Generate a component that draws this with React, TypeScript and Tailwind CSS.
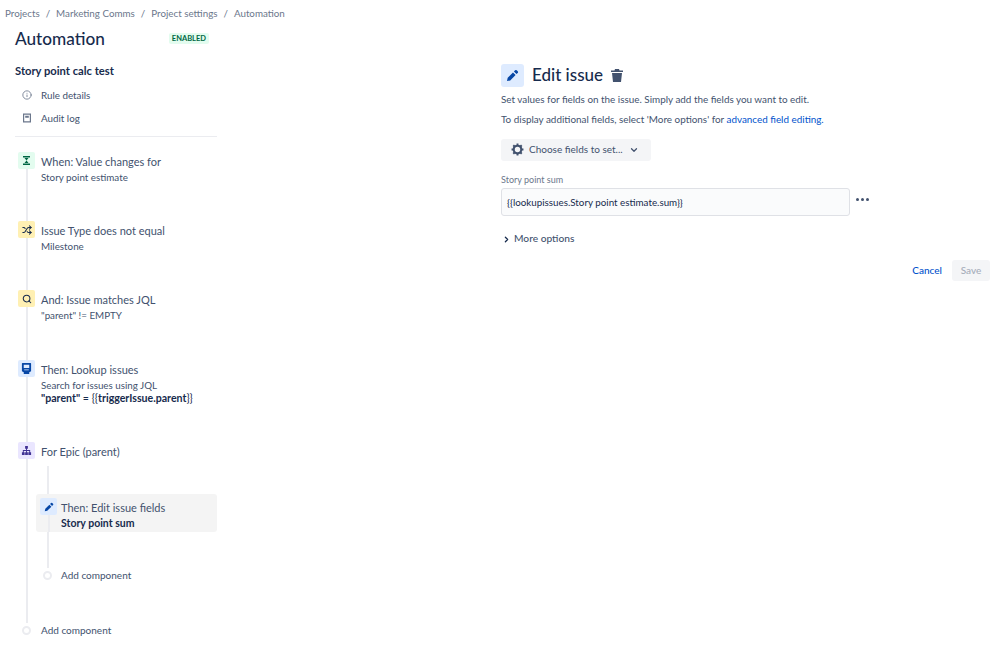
import { ChevronDown, ChevronRight, Info, Search, Shuffle } from "lucide-react";

const font = { fontFamily: 'Lato, "Noto Sans", sans-serif' };

function Pencil({ size = 12, color = "#0747a6" }: { size?: number; color?: string }) {
  return (
    <svg width={size} height={size} viewBox="0 0 16 16" fill={color}>
      <path d="M11.2 1.6a1.4 1.4 0 0 1 2 0l1.2 1.2a1.4 1.4 0 0 1 0 2l-1.5 1.5-3.2-3.2zM8.6 4.2l3.2 3.2-6.6 6.6-4 .9.9-4z" />
    </svg>
  );
}

function StepIcon({ bg, children }: { bg: string; children: React.ReactNode }) {
  return (
    <div className={`flex h-[17px] w-[17px] shrink-0 items-center justify-center rounded-[2px] ${bg}`}>{children}</div>
  );
}

function Rail({ icon }: { icon: React.ReactNode }) {
  return (
    <div className="flex w-[17px] shrink-0 flex-col items-center">
      {icon}
      <div className="w-[2px] flex-1 bg-[#ebecf0]" />
    </div>
  );
}

function Step(props: { icon: React.ReactNode; title: string; h: string; children?: React.ReactNode }) {
  return (
    <div className={`flex gap-[6px] ${props.h}`}>
      <Rail icon={props.icon} />
      <div className="min-w-0 flex-1">
        <div className="text-[11px] leading-[19px] text-[#42526e]">{props.title}</div>
        {props.children}
      </div>
    </div>
  );
}

const Dot = () => <div className="h-[9px] w-[9px] rounded-full border-2 border-[#ebecf0] bg-white" />;

export default function App() {
  return (
    <div className="h-[645px] w-[999px] overflow-hidden bg-white" style={font}>
      <div className="flex h-[27px] items-center gap-[6px] pl-[5px] text-[9.8px] text-[#6b778c]">
        <span>Projects</span>
        <span>/</span>
        <span>Marketing Comms</span>
        <span>/</span>
        <span>Project settings</span>
        <span>/</span>
        <span>Automation</span>
      </div>

      <div className="flex justify-between pl-[15px] pr-[9px]">
        {/* Left rule column */}
        <aside className="w-[202px]">
          <div className="flex h-[24px] items-center justify-between">
            <h1 className="text-[17.2px] font-medium text-[#172b4d]">Automation</h1>
            <span className="mr-[8px] mt-[-2px] rounded-[2px] bg-[#e3fcef] px-[3px] text-[7.5px] font-bold leading-[11px] text-[#006644]">
              ENABLED
            </span>
          </div>
          <div className="mt-[12px] text-[11.2px] font-bold leading-[16px] text-[#172b4d]">Story point calc test</div>
          <div className="mt-[8px] flex h-[16px] items-center gap-[9px] pl-[7px] text-[9.8px] text-[#42526e]">
            <Info size={10} color="#6b778c" />
            <span>Rule details</span>
          </div>
          <div className="mt-[7px] flex h-[16px] items-center gap-[10px] pl-[8px] text-[9.8px] text-[#42526e]">
            <svg width="8" height="10" viewBox="0 0 8 10" fill="#6b778c">
              <path fillRule="evenodd" d="M0 .500h8v9H0zM1.200 1.700v6.600h5.600V1.700zM2.200 2.700h3.600v2H2.200z" />
            </svg>
            <span>Audit log</span>
          </div>
          <div className="mt-[10px] h-px bg-[#ebecf0]" />

          <div className="ml-[3px] mt-[15px]">
            <Step
              h="h-[69px]"
              title="When: Value changes for"
              icon={
                <StepIcon bg="bg-[#e3fcef]">
                  <svg width="9" height="9" viewBox="0 0 9 9" fill="#006644">
                    <path d="M1 0h7v1.500H1zM1 7.500h7V9H1zM2.500 2h4L4.500 4.500zM4.500 4.500l2 2.500h-4z" />
                  </svg>
                </StepIcon>
              }
            >
              <div className="text-[9.8px] leading-[13px] text-[#42526e]">Story point estimate</div>
            </Step>
            <Step
              h="h-[69px]"
              title="Issue Type does not equal"
              icon={
                <StepIcon bg="bg-[#fff0b3]">
                  <Shuffle size={10} color="#172b4d" strokeWidth={2.5} />
                </StepIcon>
              }
            >
              <div className="text-[9.8px] leading-[13px] text-[#42526e]">Milestone</div>
            </Step>
            <Step
              h="h-[70px]"
              title="And: Issue matches JQL"
              icon={
                <StepIcon bg="bg-[#fff0b3]">
                  <Search size={10} color="#172b4d" strokeWidth={2.5} />
                </StepIcon>
              }
            >
              <div className="text-[9.8px] leading-[13px] text-[#42526e]">"parent" != EMPTY</div>
            </Step>
            <Step
              h="h-[82px]"
              title="Then: Lookup issues"
              icon={
                <StepIcon bg="bg-[#deebff]">
                  <svg width="11" height="11" viewBox="0 0 12 12" fill="#0747a6">
                    <path
                      fillRule="evenodd"
                      d="M1.500 0h9a.5.5 0 0 1 .5.500V9l-2 1v2H3v-2L1 9V.500a.5.500 0 0 1 .500-.500zM3 2v3.500h6V2zM3.500 7v1h5V7z"
                    />
                  </svg>
                </StepIcon>
              }
            >
              <div className="text-[9.8px] leading-[13px] text-[#42526e]">Search for issues using JQL</div>
              <div className="text-[10.6px] leading-[13px] text-[#172b4d]">
                <b>"parent"</b> = {"{{"}
                <b>triggerIssue.parent</b>
                {"}}"}
              </div>
            </Step>
            <Step
              h="h-[181px]"
              title="For Epic (parent)"
              icon={
                <StepIcon bg="bg-[#eae6ff]">
                  <svg width="11" height="11" viewBox="0 0 12 12" fill="#403294">
                    <path d="M4.500 1h3v3h-1v1.500H10V8h1v3H8V8h1V6.500H6.500V8h1v3h-3V8h1V6.500H3V8h1v3H1V8h1V5.500h3.500V4h-1z" />
                  </svg>
                </StepIcon>
              }
            >
              {/* nested branch */}
              <div className="-ml-[5px] mt-[5px]">
                <div className="ml-[11px] h-[28px] w-[2px] bg-[#ebecf0]" />
                <div className="flex h-[38px] gap-[4px] rounded-[3px] bg-[#f4f4f4] pl-[4px]">
                  <div className="flex w-[17px] shrink-0 flex-col items-center pt-[4px]">
                    <StepIcon bg="bg-[#deebff]">
                      <Pencil size={10} />
                    </StepIcon>
                    <div className="w-[2px] flex-1 bg-[#ebecf0]" />
                  </div>
                  <div className="pt-[4px]">
                    <div className="text-[11px] leading-[19px] text-[#42526e]">Then: Edit issue fields</div>
                    <div className="text-[10.5px] font-bold leading-[13px] text-[#172b4d]">Story point sum</div>
                  </div>
                </div>
                <div className="ml-[11px] h-[36px] w-[2px] bg-[#ebecf0]" />
                <div className="flex items-center gap-[9px] pl-[7px]">
                  <Dot />
                  <span className="text-[10px] leading-[14px] text-[#42526e]">Add component</span>
                </div>
              </div>
            </Step>
            <div className="flex h-[15px] items-center gap-[10px] pl-[4px]">
              <Dot />
              <span className="text-[10px] text-[#42526e]">Add component</span>
            </div>
          </div>
        </aside>

        {/* Right edit panel */}
        <main className="mt-[36px] w-[489px]">
          <div className="flex items-center">
            <div className="flex h-[23px] w-[23px] items-center justify-center rounded-[3px] bg-[#deebff]">
              <Pencil size={13} />
            </div>
            <h2 className="ml-[8px] text-[17px] font-medium leading-[24px] text-[#172b4d]">Edit issue</h2>
            <svg className="ml-[8px]" width="12" height="13" viewBox="0 0 12 13" fill="#42526e">
              <path d="M4 0h4l.5 1.500H12V3H0V1.500h3.500zM1 4h10l-1 9H2z" />
            </svg>
          </div>
          <p className="mt-[5px] text-[9.9px] leading-[14px] text-[#42526e]">
            Set values for fields on the issue. Simply add the fields you want to edit.
          </p>
          <p className="mt-[6px] text-[9.9px] leading-[14px] text-[#42526e]">
            To display additional fields, select 'More options' for{" "}
            <span className="text-[#0052cc]">advanced field editing.</span>
          </p>
          <button className="mt-[13px] flex h-[22px] w-[150px] items-center rounded-[3px] bg-[#f4f5f7] pb-[1px] pl-[10px] text-[10px] text-[#42526e]">
            <svg width="13" height="13" viewBox="0 0 24 24" fill="none" stroke="#42526e" strokeWidth="4">
              <circle cx="12" cy="12" r="7" />
              <path d="M12 1v4M12 19v4M1 12h4M19 12h4M4.200 4.200l2.800 2.800M17 17l2.800 2.800M4.200 19.800 7 17M17 7l2.800-2.800" strokeWidth="3.500" />
            </svg>
            <span className="ml-[5px]">Choose fields to set...</span>
            <ChevronDown size={10} strokeWidth={3} className="ml-[6px]" />
          </button>

          <label className="mt-[12px] block text-[9px] leading-[14px] text-[#6b778c]">Story point sum</label>
          <div className="mt-[1px] flex items-center">
            <div className="flex h-[28px] w-[349px] items-center rounded-[3px] border border-[#dfe1e6] bg-[#fafbfc] pl-[5px] pt-[1px] text-[9.8px] text-[#172b4d]">
              {"{{lookupissues.Story point estimate.sum}}"}
            </div>
            <div className="mb-[5px] ml-[6px] flex gap-[2px]">
              <i className="h-[3px] w-[3px] rounded-full bg-[#42526e]" />
              <i className="h-[3px] w-[3px] rounded-full bg-[#42526e]" />
              <i className="h-[3px] w-[3px] rounded-full bg-[#42526e]" />
            </div>
          </div>
          <div className="mt-[15px] flex h-[16px] items-center text-[10.2px] font-medium text-[#42526e]">
            <ChevronRight size={9} strokeWidth={3.5} color="#172b4d" className="ml-[1px]" />
            <span className="ml-[3px]">More options</span>
          </div>
          <div className="mt-[13px] flex items-center justify-end gap-[10px]">
            <span className="text-[10px] font-medium text-[#0052cc]">Cancel</span>
            <button className="h-[21px] w-[38px] rounded-[3px] bg-[#f4f5f7] text-[10px] font-medium text-[#a5adba]">
              Save
            </button>
          </div>
        </main>
      </div>
    </div>
  );
}
